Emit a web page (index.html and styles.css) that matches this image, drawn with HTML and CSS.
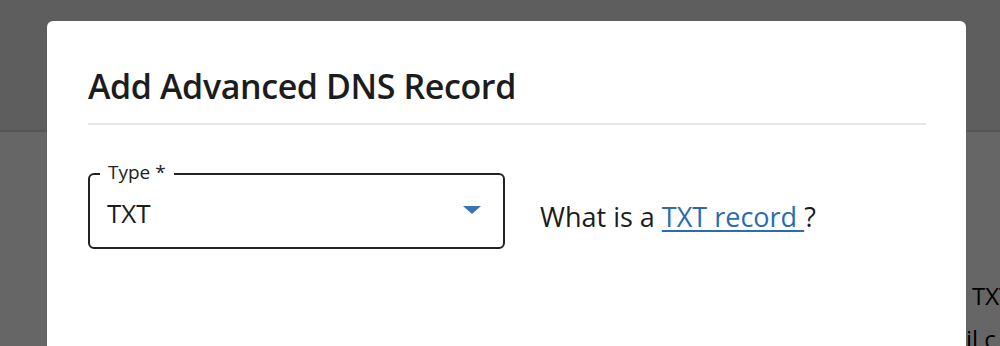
FILE: index.html
```html
<!DOCTYPE html>
<html>
<head>
<meta charset="utf-8">
<link rel="stylesheet" href="styles.css">
</head>
<body>
<div class="page">
  <div class="page-header"></div>
  <div class="page-body">
    <div class="bg-text bg-text-1">TXT</div>
    <div class="bg-text bg-text-2">il c</div>
  </div>
  <div class="overlay"></div>
  <div class="dialog">
    <h2 class="title">Add Advanced DNS Record</h2>
    <div class="divider"></div>
    <div class="row">
      <div class="select">
        <span class="select-label">Type *</span>
        <span class="select-value">TXT</span>
        <svg class="select-arrow" width="18" height="8" viewBox="0 0 18 8"><path d="M0 0 H18 L9 8 Z" fill="#3b72b3"/></svg>
      </div>
      <div class="help">What is a <a class="help-link" href="#">TXT record </a>?</div>
    </div>
  </div>
</div>
</body>
</html>
```
FILE: styles.css
```css
html, body { margin: 0; padding: 0; }
body { width: 1000px; height: 346px; overflow: hidden; font-family: "Open Sans", "Noto Sans", sans-serif; }
.page { position: relative; width: 1000px; height: 346px; overflow: hidden; background: #ffffff; }
.page-header { height: 130px; background: #ebebeb; border-bottom: 2px solid #d8d8d8; }
.page-body { position: relative; height: 214px; }
.bg-text { position: absolute; font-size: 24px; line-height: 28px; color: #000; }
.bg-text-1 { left: 972px; top: 150px; }
.bg-text-2 { left: 966px; top: 193px; }
.overlay { position: absolute; inset: 0; background: rgba(0,0,0,0.6); }
.dialog { position: absolute; left: 47px; top: 21px; width: 919px; height: 325px; background: #fff; border-radius: 6px 6px 0 0; box-sizing: border-box; padding: 0 40px 0 41px; }
.title { margin: 0; padding-top: 41px; font-size: 34px; font-weight: 600; color: #1c1c1c; line-height: 48px; letter-spacing: -0.4px; }
.divider { margin-top: 13px; height: 2px; background: #e6e6e6; }
.row { display: flex; align-items: center; margin-top: 48px; }
.select { position: relative; width: 417px; height: 76px; box-sizing: border-box; border: 2px solid #222; border-radius: 6px; }
.select-label { position: absolute; left: 10px; top: -16px; padding: 0 8px 0 8px; background: #fff; font-size: 19px; color: #222; line-height: 26px; }
.select-value { position: absolute; left: 17px; top: 21px; font-size: 26px; line-height: 34px; color: #1c1c1c; }
.select-arrow { position: absolute; right: 22px; top: 31px; }
.help { margin-left: 35px; margin-top: 10px; font-size: 27px; color: #1c1c1c; }
.help-link { color: #2b6cb0; text-decoration: underline; text-underline-offset: 3px; }
```
